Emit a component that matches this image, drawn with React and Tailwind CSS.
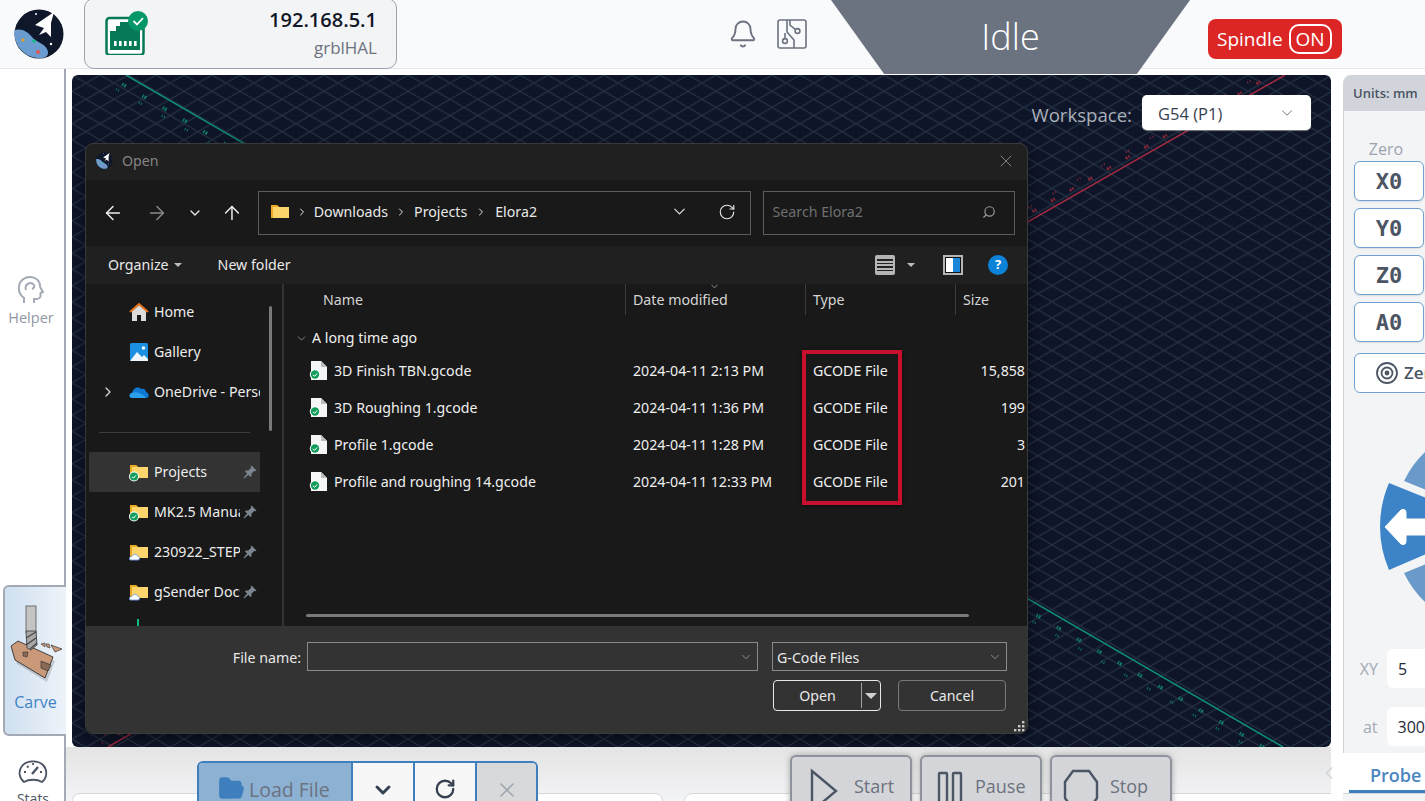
import React from "react";
import { Bell, ChevronDown, ChevronRight, ChevronLeft, ArrowLeft, ArrowRight, ArrowUp, RotateCw, X, Search, FolderOpen } from "lucide-react";

const Logo = ({ s = 50 }) => (
  <svg width={s} height={s} viewBox="0 0 50 50">
    <circle cx="25" cy="25" r="24.5" fill="#0f172a" />
    <path d="M0.5 21 C8 19 14 23 18 28 C22 33 30 34 33 40 C35 44 34 47 31 48.6 C18 52 -1 42 0.5 21Z" fill="#6b9ccf" />
    <path d="M40 3 L21 16 L30 19 L25 26 L32 23 L37 28 L37 14Z" fill="#fff" />
    <circle cx="9" cy="31" r="1.5" fill="#f59e0b" /><circle cx="20" cy="32" r="1.7" fill="#10b981" /><circle cx="24" cy="43" r="2" fill="#e25555" />
    <circle cx="22" cy="5" r="1" fill="#fff" /><circle cx="37" cy="35" r="1.2" fill="#fff" />
  </svg>
);

const Ethernet = () => (
  <svg width="44" height="44" viewBox="0 0 44 44">
    <rect x="1.5" y="7" width="37" height="37" rx="3" fill="#fff" stroke="#047857" strokeWidth="2.5" />
    <path d="M5 20 H11 V15 H15 V11 H35 V39 H5Z" fill="#047857" />
    {[9, 14, 19, 24, 29].map((x) => <rect key={x} x={x} y="30" width="2.6" height="5" fill="#fff" />)}
    <circle cx="33" cy="10" r="10" fill="#059669" />
    <path d="M28.5 10 L32 13.5 L38 7" fill="none" stroke="#fff" strokeWidth="1.8" />
  </svg>
);

const CircuitIcon = () => (
  <svg width="30" height="30" viewBox="0 0 30 30" fill="none" stroke="#6b7280" strokeWidth="1.6">
    <rect x="1" y="1" width="28" height="28" rx="2" />
    <path d="M13 1 V6 L18.5 10.5" />
    <circle cx="20.5" cy="12" r="2.4" />
    <path d="M17 29 V21 L10 13 V1" />
    <circle cx="8" cy="22" r="2.4" />
    <path d="M8 19.6 V14" />
  </svg>
);

const Folder = ({ badge }) => (
  <svg width="20" height="20" viewBox="0 0 20 20" className="shrink-0">
    <path d="M1 3 H7 L9 5 H1Z" fill="#f0b429" />
    <path d="M1 5 H19 V16 H1Z" fill="#fbd56b" />
    <path d="M1 3 V16 H3 V5 H9 L7 3Z" fill="#eba925" />
    {badge === "check" && <><circle cx="5" cy="14.5" r="5" fill="#fff" /><circle cx="5" cy="14.5" r="4" fill="#109d5b" /><path d="M3 15 L4.8 16 L7 13.3" stroke="#fff" fill="none" strokeWidth="1" /></>}
    {badge === "cloud" && <path d="M1 18 C-0.5 15.5 2 14 3 14.5 C4 11.5 8.5 12 9 14.5 C11 14.5 11 18 9 18Z" fill="#fff" stroke="#6e9ce8" strokeWidth="0.9" />}
  </svg>
);

const FileIcon = () => (
  <svg width="20" height="22" viewBox="0 0 20 22" className="shrink-0">
    <path d="M2 1 H12 L18 7 V20 H2Z" fill="#f5f5f5" />
    <path d="M12 1 V7 H18" fill="#bdbdbd" />
    <circle cx="6" cy="14.5" r="5.2" fill="#fff" />
    <circle cx="6" cy="14.5" r="4.2" fill="#109d5b" />
    <path d="M3.8 15 L5.8 16.2 L8.2 13.4" stroke="#fff" fill="none" strokeWidth="1" />
  </svg>
);

const HomeIcon = () => (
  <svg width="20" height="20" viewBox="0 0 20 20" className="shrink-0">
    <path d="M3 9 L10 3 L17 9 V19 H12 V13 H8 V19 H3Z" fill="#dcdcdc" />
    <path d="M1 10 L10 2 L19 10" fill="none" stroke="#e8731a" strokeWidth="2" />
  </svg>
);
const GalleryIcon = () => (
  <svg width="20" height="20" viewBox="0 0 20 20" className="shrink-0">
    <rect x="1" y="1" width="18" height="18" rx="1.5" fill="#1b8fe0" />
    <path d="M1 19 L8 10 L13 15 L15 13 L19 17 V19Z" fill="#eef6fd" />
    <circle cx="14.5" cy="6" r="1.8" fill="#eef6fd" />
  </svg>
);
const CloudIcon = () => (
  <svg width="20" height="14" viewBox="0 0 20 14" className="shrink-0">
    <path d="M3 13 C0 13 -0.5 8.5 3 8 C4 3 9 1 12 4 C15 3 17 5 17 7 C20 7.5 21 13 17 13Z" fill="#0f78d4" />
    <path d="M3 13 C0 13 -0.5 8.5 3 8 C7 6 14 9 17 13Z" fill="#2aa0ee" />
  </svg>
);

const PinIcon = () => (
  <svg width="14" height="14" viewBox="0 0 14 14" className="shrink-0" fill="#7d8590">
    <path d="M8.5 0.5 L13.5 5.5 L12.4 6.3 L11.2 5.9 L8.4 8.7 L8.6 11 L7.5 12 L2 6.5 L3 5.4 L5.3 5.6 L8.1 2.8 L7.7 1.6Z" />
    <path d="M4.4 8.2 L5.8 9.6 L1.2 13.4 L0.6 12.8Z" />
  </svg>
);

const NavRow = ({ icon, label, pin, selected, chevron, w, low }) => (
  <div className={`relative flex h-10 items-center pl-[40px] pr-[4px] ${low ? "pb-0" : "pb-[2px]"} ${selected ? "bg-[#333333]" : ""}`}>
    {chevron && <ChevronRight size={16} className="absolute left-[11px] text-[#d0d0d0]" />}
    {icon}
    <span className={`ml-[5px] shrink-0 overflow-hidden whitespace-nowrap text-[#ededed] ${w || ""}`}>{label}</span>
    {pin && <span className="absolute left-[154px] flex"><PinIcon /></span>}
  </div>
);

const files = [
  ["3D Finish TBN.gcode", "2024-04-11 2:13 PM", "15,858"],
  ["3D Roughing 1.gcode", "2024-04-11 1:36 PM", "199"],
  ["Profile 1.gcode", "2024-04-11 1:28 PM", "3"],
  ["Profile and roughing 14.gcode", "2024-04-11 12:33 PM", "201"],
];

const Dialog = () => (
  <div className="absolute left-[13px] top-[68px] z-10 flex h-[591px] w-[943px] flex-col overflow-hidden rounded-[8px] border border-[#3a3a3a] bg-[#202020] font-['Noto_Sans',sans-serif] text-[14.2px] text-[#e8e8e8] shadow-[0_4px_16px_rgba(0,0,0,0.5)]">
    <div className="flex h-[36px] shrink-0 items-center pb-[3px] pl-[10px] pr-[11px]">
      <Logo s={17} />
      <span className="ml-[9px] text-[#858585]">Open</span>
      <X size={20} strokeWidth={1.1} className="ml-auto text-[#8a8a8a]" />
    </div>
    <div className="flex h-[66px] shrink-0 items-center bg-[#191919] pl-[16px] pr-[12px]">
      <ArrowLeft size={22} strokeWidth={1.6} className="text-[#f0f0f0]" />
      <ArrowRight size={22} strokeWidth={1.6} className="ml-[22px] text-[#8a8a8a]" />
      <ChevronDown size={16} strokeWidth={2} className="ml-[19px] text-[#e8e8e8]" />
      <ArrowUp size={22} strokeWidth={1.6} className="ml-[18px] text-[#f0f0f0]" />
      <div className="ml-[15px] flex h-[44px] w-[494px] items-center border border-[#5c5c5c] pb-[3px] pl-[11px] pr-[14px]">
        <Folder />
        <ChevronRight size={12} className="ml-[6px]" />
        <span className="ml-[6px]">Downloads</span>
        <ChevronRight size={12} className="ml-[7px]" />
        <span className="ml-[7px]">Projects</span>
        <ChevronRight size={12} className="ml-[8px]" />
        <span className="ml-[8px]">Elora2</span>
        <ChevronDown size={19} strokeWidth={1.4} className="ml-auto" />
        <RotateCw size={18} strokeWidth={1.5} className="ml-[29px]" />
      </div>
      <div className="ml-[12px] flex h-[44px] w-[253px] items-center justify-between border border-[#5c5c5c] pb-[3px] pl-[9px] pr-[18px] text-[#6f6f6f]">
        <span>Search Elora2</span>
        <Search size={14} strokeWidth={2} className="-scale-x-100 text-[#9a9a9a]" />
      </div>
    </div>
    <div className="flex h-[38px] shrink-0 items-center pl-[22px] pr-[19px]">
      <span>Organize</span>
      <span className="ml-[5px] border-x-[4px] border-t-[4px] border-x-transparent border-t-[#bdbdbd]" />
      <span className="ml-[36px]">New folder</span>
      <div className="ml-auto flex h-[20px] w-[20px] flex-col justify-center gap-[2px] rounded-[2px] bg-[#b5b5b5] px-[2px]">
        {[0, 1, 2, 3].map((i) => <span key={i} className="h-[1.5px] bg-[#222222]" />)}
      </div>
      <span className="ml-[12px] border-x-[4px] border-t-[4px] border-x-transparent border-t-[#bdbdbd]" />
      <div className="ml-[28px] flex h-[20px] w-[20px] border-2 border-[#b5b5b5] bg-[#111111] p-[1px]">
        <span className="flex-1 bg-white" /><span className="flex-1 bg-[#1c86d8]" />
      </div>
      <span className="ml-[25px] flex h-[20px] w-[20px] items-center justify-center rounded-full bg-[#0c83d9] text-[13px] font-bold text-white">?</span>
    </div>
    <div className="flex min-h-0 flex-1 bg-[#191919]">
      <div className="relative w-[198px] shrink-0 overflow-hidden border-r-[2px] border-[#333333] pl-[3px] pt-[9px]">
        <div className="w-[171px] overflow-hidden">
          <NavRow icon={<HomeIcon />} label="Home" />
          <NavRow icon={<GalleryIcon />} label="Gallery" />
          <NavRow icon={<CloudIcon />} label="OneDrive - Personal" chevron w="w-[106px]" />
          <div className="mx-[10px] my-[19px] h-px w-[151px] bg-[#3c3c3c]" />
          <NavRow icon={<Folder badge="check" />} label="Projects" pin selected low />
          <NavRow icon={<Folder badge="check" />} label="MK2.5 Manual" pin w="w-[86px]" low />
          <NavRow icon={<Folder badge="cloud" />} label="230922_STEP" pin w="w-[86px]" low />
          <NavRow icon={<Folder badge="cloud" />} label="gSender Docs" pin w="w-[86px]" low />
        </div>
        <span className="absolute left-[183px] top-[22px] h-[125px] w-[3px] rounded-full bg-[#7a7a7a]" />
        <span className="absolute bottom-[-3px] left-[51px] h-[10px] w-[2px] bg-[#10b981]" />
      </div>
      <div className="relative min-w-0 flex-1 overflow-hidden">
        <div className="flex h-[31px] items-center text-[#d5d5d5]">
          <span className="ml-[39px] w-[302px]">Name</span>
          <span className="relative w-[180px] border-l border-[#3c3c3c] pl-[7px] leading-[31px]">Date modified
            <ChevronDown size={11} className="absolute left-[83px] top-[-3px] text-[#9a9a9a]" />
          </span>
          <span className="w-[150px] border-l border-[#3c3c3c] pl-[7px] leading-[31px]">Type</span>
          <span className="border-l border-[#3c3c3c] pl-[7px] leading-[31px]">Size</span>
        </div>
        <div className="mt-[9px] flex h-[28px] items-center pl-[11px]">
          <ChevronDown size={13} strokeWidth={1.5} className="text-[#9a9a9a]" />
          <span className="ml-[4px] text-[#f0f0f0]">A long time ago</span>
        </div>
        {files.map(([n, d, s]) => (
          <div key={n} className="flex h-[37px] items-center text-[#efefef]">
            <span className="ml-[25px]"><FileIcon /></span>
            <span className="ml-[5px] w-[299px] whitespace-nowrap">{n}</span>
            <span className="w-[180px] whitespace-nowrap">{d}</span>
            <span className="w-[120px]">GCODE File</span>
            <span className="w-[92px] text-right">{s}</span>
          </div>
        ))}
        <span className="absolute bottom-[9px] left-[22px] h-[3px] w-[663px] rounded-full bg-[#7a7a7a]" />
        <div className="absolute left-[518px] top-[66px] h-[155px] w-[100px] border-[4px] border-[#c8102e] shadow-[0_1px_4px_rgba(0,0,0,0.5)]" />
      </div>
    </div>
    <div className="relative h-[107px] shrink-0 bg-[#333333] pl-[145px] pt-[16px]">
      <div className="flex h-[29px] items-center">
        <span className="w-[70px] translate-y-[1px] text-right">File name:</span>
        <div className="ml-[6px] flex h-[29px] w-[451px] items-center justify-end border border-[#8a8a8a] pr-[4px]"><ChevronDown size={14} strokeWidth={1.2} className="text-[#b0b0b0]" /></div>
        <div className="ml-[14px] flex h-[29px] w-[235px] items-center justify-between border border-[#8a8a8a] pl-[4px] pr-[4px]"><span className="translate-y-[1px]">G-Code Files</span><ChevronDown size={14} strokeWidth={1.2} className="text-[#b0b0b0]" /></div>
      </div>
      <div className="mt-[9px] flex pl-[542px]">
        <div className="flex h-[31px] w-[108px] items-center rounded-[4px] border border-[#e8e8e8]">
          <span className="w-[87px] text-center">Open</span>
          <span className="h-[25px] w-px bg-[#a0a0a0]" />
          <span className="ml-[3px] border-x-[6px] border-t-[6px] border-x-transparent border-t-[#d0d0d0]" />
        </div>
        <div className="ml-[17px] flex h-[31px] w-[108px] items-center justify-center rounded-[4px] border border-[#7a7a7a]">Cancel</div>
      </div>
      <svg width="12" height="12" viewBox="0 0 12 12" className="absolute bottom-[1px] right-[1px]" fill="#c8c8c8">
        <rect x="8" y="1" width="2.4" height="2.4" /><rect x="4" y="5" width="2.4" height="2.4" /><rect x="8" y="5" width="2.4" height="2.4" /><rect x="0" y="9" width="2.4" height="2.4" /><rect x="4" y="9" width="2.4" height="2.4" /><rect x="8" y="9" width="2.4" height="2.4" />
      </svg>
    </div>
  </div>
);

const Canvas = () => (
  <div className="relative ml-[6px] mt-[6px] h-[672px] w-[1259px] shrink-0 overflow-hidden rounded-[6px] bg-[#0e1528]">
    <svg width="1259" height="672" className="absolute inset-0">
      <defs>
        <pattern id="grid" width="28" height="16.2" patternUnits="userSpaceOnUse">
          <path d="M0 0 L28 16.2 M28 0 L0 16.2" stroke="#253144" strokeWidth="1.2" />
        </pattern>
      </defs>
      <rect width="1259" height="672" fill="url(#grid)" />
      <path d="M54 0 L1211 672" stroke="#0f9377" strokeWidth="1.5" />
      <path d="M50 9 L1207 681" stroke="#0d7a63" strokeWidth="3.5" strokeDasharray="1.5 1 2 19" />
      <path d="M44 14 L1201 686" stroke="#0d7a63" strokeWidth="2.5" strokeDasharray="1 1.5 1 23" />
      <path d="M1213 0 L36 672" stroke="#a62b42" strokeWidth="1.5" />
      <path d="M1207 -4 L30 668" stroke="#8c2638" strokeWidth="3" strokeDasharray="1.5 1 2 17" />
      <path d="M1203 -8 L26 664" stroke="#8c2638" strokeWidth="2" strokeDasharray="1 2 1 24" />
    </svg>
    <div className="absolute right-[20px] top-[20px] flex items-center">
      <span className="translate-y-[2px] text-[18.6px] text-[#a9afb9]">Workspace:</span>
      <div className="ml-[10px] flex h-[35px] w-[169px] items-center justify-between rounded-[5px] bg-white pl-[16px] pr-[15px] text-[16.5px] text-[#374151] shadow-[0_1px_1px_rgba(150,150,150,0.8)]">
        <span className="translate-y-[2px]">G54 (P1)</span><ChevronDown size={18} strokeWidth={1.3} className="text-[#6b7280]" />
      </div>
    </div>
    <Dialog />
  </div>
);

const CarveArt = () => (
  <svg width="58" height="82" viewBox="8 600 58 82">
    <path d="M15 650 L22 645 L57 661 L49 682 L19 664Z" fill="#00000026" />
    <path d="M13 646 L20 641 L55 657 L47 678 L17 660Z" fill="#c9997a" stroke="#333" strokeWidth="0.9" />
    <path d="M43 661 L53 665 L50 671 L43 668Z" fill="#8a6a52" stroke="#333" strokeWidth="0.7" />
    <path d="M25 652 L30 652 L29 657 L25 656Z" fill="#8a6a52" stroke="#333" strokeWidth="0.6" />
    <rect x="28" y="606" width="10" height="27" fill="#c4c4c4" stroke="#555" strokeWidth="0.8" />
    <path d="M28 631 H38 L39 645 L33 650 L29 648Z" fill="#a8a8a8" stroke="#444" strokeWidth="0.9" />
    <path d="M28 638 L38 632 M28 645 L38 638 M32 649 L39 643" stroke="#444" strokeWidth="1.2" />
    <path d="M53 645 L64 649 L57 652Z" fill="#c9997a" stroke="#333" strokeWidth="0.7" />
    <path d="M43 644 L47 643 L47 647Z M48 644 L51 644 L52 648 L49 647Z" fill="#c9997a" stroke="#333" strokeWidth="0.6" />
  </svg>
);

const Sidebar = () => (
  <div className="relative w-[66px] shrink-0">
    <div className="absolute bottom-0 right-0 top-0 w-[2px] bg-[#a3a9b5]" />
    <div className="absolute left-0 top-[206px] flex w-[62px] flex-col items-center text-[14.5px] text-[#8f96a3]">
      <svg width="30" height="30" viewBox="0 0 30 30" fill="none" stroke="#a3a9b5" strokeWidth="2">
        <path d="M8 28 V23 C4 20 2 16 3 11 C4 5 9 2 14 2 C20 2 24 6 24 11 C24 13 26 15 27 17 L24.5 18 V21 C24.5 23 22 24 20 24 H18 V28" />
        <path d="M10 15 C8 9 15 6 18 10 C19 12 18 13 16 14" />
      </svg>
      <span className="mt-[2px]">Helper</span>
    </div>
    <div className="absolute left-[3px] top-[516px] z-[1] flex h-[151px] w-[63px] flex-col items-center rounded-l-[6px] border-y-2 border-l-2 border-[#a3a9b5] bg-gradient-to-r from-[#cfe0f0] to-[#eef3f9] pt-[13px]">
      <span className="-ml-[2px] flex"><CarveArt /></span>
      <span className="mt-[10px] text-[16px] leading-[20px] text-[#3f83c6]">Carve</span>
    </div>
    <div className="absolute left-0 top-[689px] flex w-full flex-col items-center text-[14px] text-[#4b5563]">
      <svg width="30" height="28" viewBox="0 0 30 28" fill="none" stroke="#4b5563" strokeWidth="1.8">
        <path d="M6 24 C1 20 0 13 4 8 C9 2 20 2 25 7 C30 12 29 20 24 24 C19 21 11 21 6 24Z" />
        <path d="M14 16 L20 9" strokeWidth="2.4" /><path d="M6 14 H8 M9 8 L10.5 9.5 M15 5 V7 M24 14 H22" />
      </svg>
      <span className="mt-[3px] leading-[20px]">Stats</span>
    </div>
  </div>
);

const BigBtn = ({ icon, label, pl, gap }) => (
  <div className={`flex h-[60px] w-[122px] items-start rounded-t-[6px] border-2 border-[#8d929c] bg-[#d4d5d8] pt-[11px] text-[18px] text-[#6b7280] shadow-[0_0_6px_rgba(120,120,120,0.6)] ${pl}`}>
    {icon}
    <span className={`mt-[6px] leading-[24px] ${gap}`}>{label}</span>
  </div>
);

const Bottom = () => (
  <div className="relative min-h-0 flex-1 overflow-hidden bg-gradient-to-b from-[#e4e4e4] to-[#f3f4f6]">
    <div className="absolute left-[6px] top-[46px] h-[20px] w-[591px] rounded-t-[8px] border border-[#d5d7db] bg-white" />
    <div className="absolute left-[618px] top-[46px] h-[20px] w-[700px] rounded-t-[8px] border border-[#d5d7db] bg-white" />
    <div className="relative ml-[131px] mt-[14px] flex h-[50px] w-[341px] overflow-hidden rounded-t-[6px] border-2 border-b-0 border-[#3f7fbe] text-[#6b7280]">
      <div className="flex w-[152px] shrink-0 items-start bg-[#8db1d3] pl-[19px] pt-[12px] text-[19.5px]">
        <FolderOpen size={27} fill="#3f7fbe" stroke="#3f7fbe" className="shrink-0" />
        <span className="ml-[4px] whitespace-nowrap leading-[30px]">Load File</span>
      </div>
      <div className="flex w-[62px] shrink-0 justify-center border-l-2 border-[#3f7fbe] bg-[#f7f7f8] pt-[15px]"><ChevronDown size={24} strokeWidth={3} className="text-[#374151]" /></div>
      <div className="flex w-[62px] shrink-0 justify-center border-l-2 border-[#3f7fbe] bg-[#f7f7f8] pt-[15px]"><RotateCw size={22} strokeWidth={2.5} className="text-[#374151]" /></div>
      <div className="flex flex-1 justify-center border-l-2 border-[#3f7fbe] bg-[#d8d9db] pt-[15px]"><X size={24} strokeWidth={1.5} className="text-[#9ca3af]" /></div>
    </div>
    <div className="absolute left-[724px] top-[8px] flex gap-[8px]">
      <BigBtn pl="pl-[18px]" gap="ml-[16px]" label="Start" icon={<svg width="28" height="44" viewBox="0 0 28 44" fill="none" stroke="#4b5563" strokeWidth="2.4" className="shrink-0"><path d="M2 3 L26 23 L2 43Z" /></svg>} />
      <BigBtn pl="pl-[15px]" gap="ml-[12px]" label="Pause" icon={<svg width="26" height="44" viewBox="0 0 26 44" fill="none" stroke="#4b5563" strokeWidth="2.4" className="shrink-0"><rect x="2" y="5" width="8" height="38" rx="1" /><rect x="16" y="5" width="8" height="38" rx="1" /></svg>} />
      <BigBtn pl="pl-[11px]" gap="ml-[11px]" label="Stop" icon={<svg width="36" height="44" viewBox="0 0 36 44" fill="none" stroke="#4b5563" strokeWidth="2.4" className="shrink-0"><path d="M10 3 H26 L34 14 V30 L26 41 H10 L2 30 V14Z" /></svg>} />
    </div>
  </div>
);

const ZeroBtn = ({ t }) => (
  <div className="flex h-[40px] w-[70px] items-center justify-center rounded-[6px] border border-[#6ea2d2] bg-white font-['DejaVu_Sans_Mono',monospace] text-[22px] font-bold text-[#4b5563] shadow-[0_1px_2px_rgba(0,0,0,0.1)]">{t}</div>
);

const Right = () => (
  <div className="ml-[12px] mt-[6px] flex min-w-0 flex-1 flex-col overflow-hidden">
    <div className="relative h-[678px] overflow-hidden rounded-tl-[8px] border-l border-[#d1d5db] bg-[#f3f4f6]">
      <div className="flex h-[36px] items-center bg-[#d1d5db] pl-[9px] pt-[2px] text-[13px] font-semibold text-[#4b5563]">Units: mm</div>
      <div className="pl-[10px]">
        <div className="mt-[28px] w-[64px] text-center text-[16px] leading-[20px] text-[#9ca3af]">Zero</div>
        <div className="mt-[2px] flex flex-col gap-[7px]">
          <ZeroBtn t="X0" /><ZeroBtn t="Y0" /><ZeroBtn t="Z0" /><ZeroBtn t="A0" />
        </div>
        <div className="mt-[11px] flex h-[40px] w-[90px] items-center rounded-[6px] border border-[#6ea2d2] bg-white pl-[21px] text-[17px] font-semibold text-[#4b5563]">
          <svg width="22" height="22" viewBox="0 0 22 22" fill="none" stroke="#4b5563" strokeWidth="1.8" className="shrink-0"><circle cx="11" cy="11" r="10" /><circle cx="11" cy="11" r="5.5" /><circle cx="11" cy="11" r="1.5" fill="#4b5563" /></svg>
          <span className="ml-[6px]">Zero</span>
        </div>
        <svg width="82" height="170" viewBox="1343 445 82 170" className="-ml-[10px] mt-[53px] block">
          <path d="M1403 480 A100 100 0 0 1 1425 450 L1425 489Z" fill="#6a9ac9" />
          <path d="M1403 572 A100 100 0 0 0 1425 602 L1425 563Z" fill="#6a9ac9" />
          <path d="M1388 482 A110 110 0 0 0 1388 569 L1425 553 L1425 497Z" fill="#3d83c7" />
          <path d="M1384 526 L1400 509 Q1405 507 1405 512 V518 H1425 V534 H1405 V540 Q1405 545 1400 543Z" fill="#fff" stroke="#fff" strokeLinejoin="round" />
        </svg>
        <div className="mt-[33px] flex items-center">
          <span className="w-[24px] text-right text-[16px] text-[#a3a9b5]">XY</span>
          <div className="ml-[9px] flex h-[39px] flex-1 items-center rounded-l-[6px] bg-white pl-[11px] text-[16px] text-[#1f2937]">5</div>
        </div>
        <div className="mt-[19px] flex items-center">
          <span className="w-[24px] text-right text-[16px] text-[#a3a9b5]">at</span>
          <div className="ml-[9px] flex h-[39px] flex-1 items-center rounded-l-[6px] bg-white pl-[11px] text-[16px] text-[#1f2937]">300</div>
        </div>
      </div>
    </div>
    <div className="relative flex-1 bg-white">
      <div className="absolute bottom-[8px] left-[6px] right-0 h-[3px] bg-[#3f7fbe]" />
      <div className="absolute bottom-0 left-0 right-0 h-[8px] border-t border-[#d1d5db] bg-[#f3f4f6]" />
      <span className="absolute left-[27px] top-[10px] text-[18px] font-semibold leading-[24px] text-[#4a86c0]">Probe</span>
    </div>
  </div>
);

export default function App() {
  return (
    <div className="flex h-[801px] w-[1425px] flex-col overflow-hidden bg-white font-['Open_Sans',sans-serif]">
      <div className="relative z-20 flex h-[69px] shrink-0 items-center border-b border-[#e5e7eb] bg-[#f9fafb]">
        <span className="ml-[14px] flex"><Logo /></span>
        <div className="ml-[20px] flex h-[71px] w-[313px] -translate-y-[1px] items-center rounded-[10px] border border-[#9ca3af] bg-[#f3f4f6] pl-[20px] pr-[19px]">
          <Ethernet />
          <div className="ml-auto flex flex-col items-end">
            <span className="text-[20px] font-semibold leading-[28px] text-[#111827]">192.168.5.1</span>
            <span className="translate-y-[1px] text-[17px] leading-[26px] text-[#6b7280]">grblHAL</span>
          </div>
        </div>
        <Bell size={30} strokeWidth={1.5} className="ml-[331px] text-[#6b7280]" />
        <span className="ml-[19px] flex"><CircuitIcon /></span>
        <div className="absolute left-[831px] top-0 flex h-[74px] w-[359px] items-center justify-center bg-[#6b7280] [clip-path:polygon(0_0,100%_0,85.2%_100%,14.8%_100%)]">
          <span className="text-[36px] font-light text-white">Idle</span>
        </div>
        <div className="absolute left-[1208px] top-[19px] flex h-[40px] w-[134px] items-center rounded-[8px] bg-[#dc2626] pl-[9px] text-[19px] text-white">
          Spindle
          <span className="ml-[6px] flex h-[30px] w-[43px] items-center justify-center rounded-[10px] border-2 border-white">ON</span>
        </div>
      </div>
      <div className="relative flex min-h-0 flex-1">
        <Sidebar />
        <div className="flex w-[1265px] shrink-0 flex-col">
          <Canvas />
          <Bottom />
        </div>
        <Right />
        <ChevronLeft size={20} strokeWidth={2} className="absolute left-[1319px] top-[694px] z-10 text-[#d1d5db]" />
      </div>
    </div>
  );
}
